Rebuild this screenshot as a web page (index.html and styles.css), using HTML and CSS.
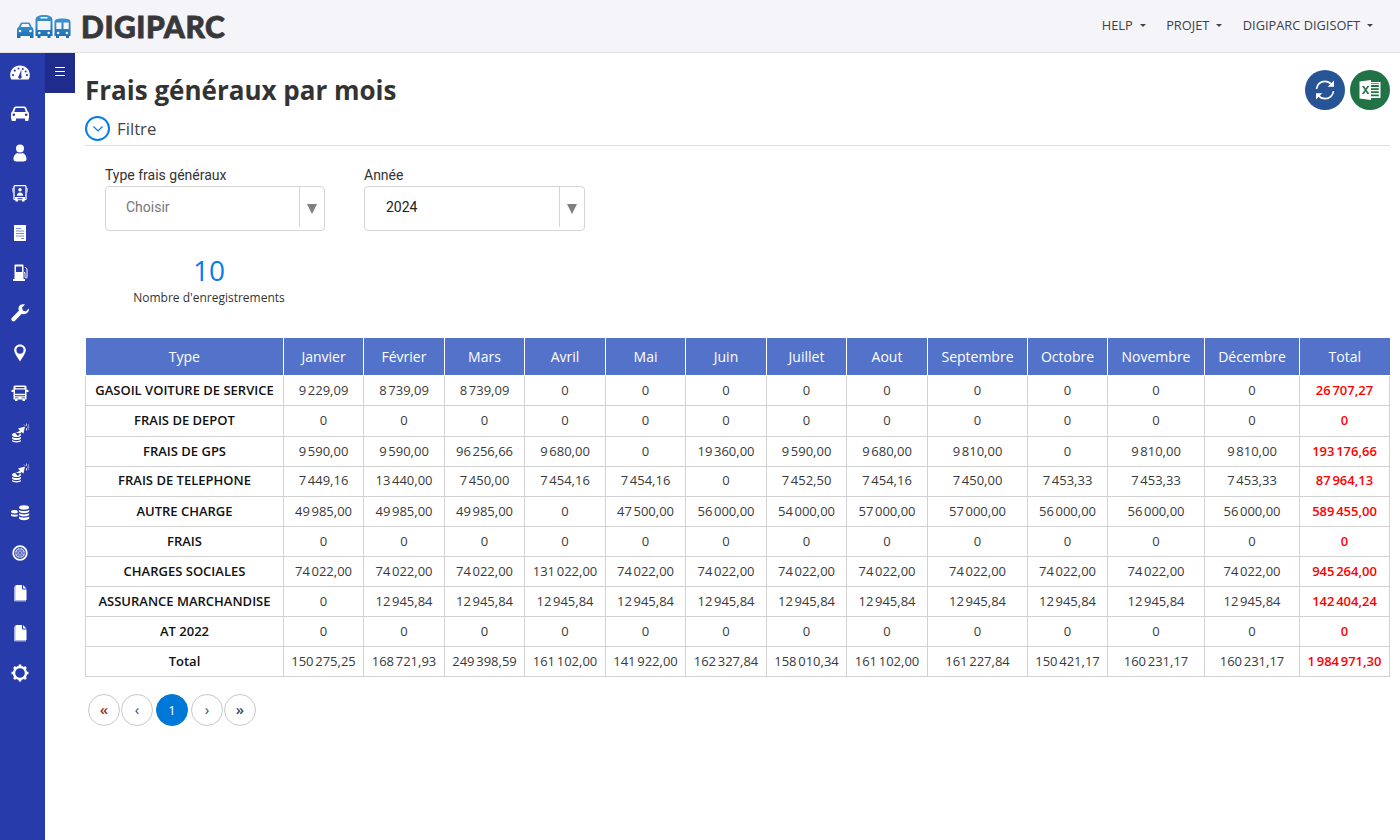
FILE: index.html
```html
<!DOCTYPE html>
<html lang="fr">
<head>
<meta charset="utf-8">
<title>Frais généraux par mois</title>
<link rel="stylesheet" href="styles.css">
</head>
<body>
<svg class="defs" width="0" height="0" aria-hidden="true">
  <defs>
    <linearGradient id="lg" x1="0" y1="0" x2="0" y2="1"><stop offset="0" stop-color="#3f93cf"/><stop offset="1" stop-color="#1a6fb0"/></linearGradient>
  </defs>
</svg>
<header class="topbar">
  <div class="brand">
    <svg class="brand-icon" width="56" height="24" viewBox="0 0 56 24">
      <path fill="url(#lg)" fill-rule="evenodd" d="M1 23v-8c0-1.500.7-2.500 1.700-3l1.500-3.300C4.600 7.800 5.300 7.500 6 7.500h6.500c.8 0 1.400.3 1.800 1.200l1.500 3.300c1 .5 1.700 1.500 1.700 3v8h-3.500v-2H4.500v2zM4.800 12h9l-1.200-3H6zM2.700 16a1.300 1.300 0 0 0 2.600 0 1.300 1.300 0 0 0-2.600 0zM13.200 16a1.300 1.300 0 0 0 2.600 0 1.300 1.300 0 0 0-2.600 0z"/>
      <path fill="url(#lg)" fill-rule="evenodd" d="M19.500 21V5c0-3.500 3-5 8.500-5s8.500 1.500 8.500 5v16h-2v2h-3v-2h-7v2h-3v-2zM21.500 6v9h13V6zM24.500 2v1.500h7V2zM22 18a1.300 1.300 0 0 0 2.600 0 1.300 1.300 0 0 0-2.600 0zM31.400 18a1.300 1.300 0 0 0 2.600 0 1.300 1.300 0 0 0-2.600 0z"/>
      <path fill="url(#lg)" fill-rule="evenodd" d="M38.500 21V7c0-2.500 2-3.500 8-3.500s8 1 8 3.500v14h-1.500v2h-3v-2h-7v2h-3v-2zM40.300 7.500V14h5.200V7.500zM47.500 7.500V14h5.200V7.500zM40.800 18a1.300 1.300 0 0 0 2.600 0 1.300 1.300 0 0 0-2.600 0zM49.600 18a1.300 1.300 0 0 0 2.600 0 1.300 1.300 0 0 0-2.600 0z"/>
    </svg>
    <span class="brand-name">DIGIPARC</span>
  </div>
  <nav class="topnav">
    <a class="topnav-item">HELP</a>
    <a class="topnav-item">PROJET</a>
    <a class="topnav-item">DIGIPARC DIGISOFT</a>
  </nav>
</header>

<div class="shell">
  <aside class="sidebar">
    <!-- gauge -->
    <svg class="side-icon" viewBox="0 0 20 20"><path fill="#fff" fill-rule="evenodd" d="M10 2.500C4.500 2.500.2 6.500.2 12c0 1.800.4 3.500 1.200 4.500h17.200c.8-1 1.200-2.700 1.200-4.500 0-5.500-4.300-9.500-9.800-9.500zM3 11a1.100 1.100 0 1 0 0 2.200A1.100 1.100 0 0 0 3 11zm1.800-4.500a1.100 1.100 0 1 0 0 2.200 1.100 1.100 0 0 0 0-2.200zm3.700-1.900a1 1 0 1 0 0 2 1 1 0 0 0 0-2zm4.300.4a1 1 0 1 0 0 2 1 1 0 0 0 0-2zm2.900 2.500a1 1 0 1 0 0 2 1 1 0 0 0 0-2zM17 11a1.100 1.100 0 1 0 0 2.200 1.100 1.100 0 0 0 0-2.200zM11.400 6.500L9 12.500a1.800 1.800 0 0 0-.8 1.500 1.800 1.800 0 1 0 3.100-1.300z"/></svg>
    <!-- car -->
    <svg class="side-icon" viewBox="0 0 20 20"><path fill="#fff" fill-rule="evenodd" d="M1.500 17v-1.500H1V11c0-1 .5-1.800 1.200-2.200L3.500 5.500C4 4 5 3.500 6.300 3.500h7.400c1.300 0 2.300.5 2.800 2l1.300 3.300c.7.400 1.200 1.200 1.200 2.200v4.500h-.5V17a1 1 0 0 1-1 1h-1.500a1 1 0 0 1-1-1v-1.500H6V17a1 1 0 0 1-1 1H2.500a1 1 0 0 1-1-1zM4.200 9h11.600l-1-3c-.2-.6-.6-1-1.300-1H6.500c-.7 0-1.100.4-1.300 1zM2.500 11.800a1.300 1.300 0 0 0 2.600 0 1.300 1.300 0 0 0-2.600 0zm12.400 0a1.300 1.300 0 0 0 2.600 0 1.300 1.300 0 0 0-2.600 0z"/></svg>
    <!-- user -->
    <svg class="side-icon" viewBox="0 0 20 20"><circle cx="10" cy="5.500" r="4" fill="#fff"/><path fill="#fff" d="M3.500 16c0-3.800 2.500-5.800 4-6 1 .8 4 .8 5 0 1.500.2 4 2.200 4 6 0 1.800-1.500 2.500-3 2.500h-7c-1.500 0-3-.7-3-2.500z"/></svg>
    <!-- bus driver -->
    <svg class="side-icon" viewBox="0 0 20 20"><path fill="none" stroke="#fff" stroke-width="1.300" d="M5 2.700h10a1 1 0 0 1 1 1v12a1 1 0 0 1-1 1H5a1 1 0 0 1-1-1v-12a1 1 0 0 1 1-1z"/><path fill="#fff" d="M5 14h10v3H5zM5.500 17h2.500v1.500H5.500zM12 17h2.500v1.500H12zM2.500 5H4v.8L3.200 6v3.500h-.7zM16 5h1.500v4.500h-.7V6L16 5.800z"/><circle cx="10" cy="6.800" r="1.700" fill="#fff"/><path fill="#fff" d="M6.800 12.800c0-2 1.400-3.300 3.200-3.300s3.200 1.300 3.200 3.300z"/><path fill="#283bab" d="M7.500 15.200h5v1h-5z"/></svg>
    <!-- document -->
    <svg class="side-icon" viewBox="0 0 20 20"><path fill="#fff" d="M4 2h12v16H4z"/><path stroke="#7d89cf" stroke-width="1" d="M6 5.500h5M6 8h8M6 10.500h8M6 13h8M11 15.500h3" fill="none"/></svg>
    <!-- fuel -->
    <svg class="side-icon" viewBox="0 0 20 20"><path fill="#fff" fill-rule="evenodd" d="M4.500 2.500C4.500 1.700 5 1.500 5.500 1.500h7c.7 0 1 .4 1 1V16H15v2H3v-2h1.500zM6 3.500V9h6V3.500z"/><path fill="none" stroke="#fff" stroke-width="1" d="M15 4l2 2v8c0 1.500-1.700 1.500-2 0V10l-1-1"/></svg>
    <!-- wrench -->
    <svg class="side-icon" viewBox="0 0 20 20"><path fill="#fff" d="M18.800 5.500l-3 3-3-1-.8-3 3-3c-2.500-.7-5 0-6 2-.7 1.300-.7 2.800 0 4L2 14.800c-1 1-1 2 0 3s2 1 3 0l6.800-7c1.300.7 3 .6 4.500-.3 2-1.200 3-3 2.500-5z"/></svg>
    <!-- pin -->
    <svg class="side-icon" viewBox="0 0 20 20"><path fill="#fff" fill-rule="evenodd" d="M10 1.500c-3.400 0-5.800 2.600-5.800 5.600 0 3.500 3.500 7.400 5.800 11.400 2.300-4 5.800-7.900 5.800-11.400 0-3-2.400-5.600-5.800-5.600zm0 2a3.600 3.600 0 1 1 0 7.200 3.600 3.600 0 0 1 0-7.200z"/></svg>
    <!-- truck front -->
    <svg class="side-icon" viewBox="0 0 20 20"><path fill="#fff" fill-rule="evenodd" d="M4.500 2.500h11l1 1v3.300h1.300a.7.700 0 0 1 .7.700v1.500h-2V16.500H15v1.500h-2.500v-1.500h-5V18H5v-1.500H3.500V9h-2V7.500a.7.700 0 0 1 .7-.7h1.300V3.500zM5.500 4v1.200h9V4zM5 6.500v4.300h10V6.500zM5 12.300v1h10v-1zM5 14.500v.8h3.500v-.8zM11.500 14.500v.8H15v-.8z"/></svg>
    <!-- coins + spark -->
    <svg class="side-icon" viewBox="0 0 20 20"><path fill="#fff" d="M2 12c0-1.300 2-2.200 4.500-2.200s4.500.9 4.500 2.200-2 2.100-4.500 2.100S2 13.300 2 12zM2 14c1 .8 2.800 1 4.500 1s3.500-.2 4.500-1v1.200c0 1.100-2 1.800-4.500 1.800S2 16.300 2 15.200zM2 17c1 .7 2.800 1 4.500 1s3.500-.3 4.500-1v.8c0 1-2 1.700-4.500 1.700S2 18.800 2 17.800zM15 3.500L8 5.500l2 2-4.500 3L8 13l3.500-4 2 1.500z"/><path stroke="#c5cbec" stroke-width="1" fill="none" d="M16.500.5v2.300M16.500 5v2.500M19.300 4h-2M14 1.500l1.300 1.300M19 1.500l-1.300 1.300M17.700 5.300L19 6.600"/></svg>
    <svg class="side-icon" viewBox="0 0 20 20"><path fill="#fff" d="M2 12c0-1.300 2-2.200 4.500-2.200s4.500.9 4.500 2.200-2 2.100-4.500 2.100S2 13.300 2 12zM2 14c1 .8 2.800 1 4.500 1s3.500-.2 4.500-1v1.200c0 1.100-2 1.800-4.500 1.800S2 16.300 2 15.200zM2 17c1 .7 2.800 1 4.500 1s3.500-.3 4.500-1v.8c0 1-2 1.700-4.500 1.700S2 18.800 2 17.800zM15 3.500L8 5.500l2 2-4.500 3L8 13l3.500-4 2 1.500z"/><path stroke="#c5cbec" stroke-width="1" fill="none" d="M16.500.5v2.300M16.500 5v2.500M19.300 4h-2M14 1.500l1.300 1.300M19 1.500l-1.300 1.300M17.700 5.300L19 6.600"/></svg>
    <!-- coin stacks -->
    <svg class="side-icon" viewBox="0 0 20 20"><path fill="#fff" d="M9 4.500c0-1.300 2-2.200 5-2.200s5.200.9 5.200 2.200-2.200 2.200-5.200 2.200-5-.9-5-2.200zM9 7c1 .8 3 1.100 5 1.100s4.200-.3 5.200-1.100v1.300c0 1.100-2.200 1.900-5.200 1.900s-5-.8-5-1.900zM9 10.300c1 .8 3 1.100 5 1.100s4.200-.3 5.200-1.100v1.300c0 1.100-2.200 1.900-5.200 1.900s-5-.8-5-1.900zM9 13.600c1 .8 3 1.100 5 1.100s4.200-.3 5.200-1.100v1.400c0 1.300-2.200 2.200-5.200 2.200s-5-.9-5-2.200zM1 8.800c0-1 1.500-1.700 3.500-1.700 1.300 0 2.500.3 3.200.8V10c-.8.300-2 .5-3.200.5-2 0-3.500-.7-3.500-1.700zM1 11c1 .6 2.300.8 3.500.8s2.400-.1 3.200-.4v1.900c-.8.3-2 .4-3.200.4-2 0-3.500-.6-3.500-1.400z"/></svg>
    <!-- tyre -->
    <svg class="side-icon" viewBox="0 0 20 20"><circle cx="10" cy="10" r="6.800" fill="none" stroke="#fff" stroke-width="1.800"/><circle cx="10" cy="10" r="5" fill="#c8cdec"/><circle cx="10" cy="10" r="3.200" fill="none" stroke="#4a5bbb" stroke-width=".8"/><path stroke="#4a5bbb" stroke-width=".7" d="M10 5v10M5 10h10M6.500 6.500l7 7M13.500 6.500l-7 7"/></svg>
    <!-- file 3d -->
    <svg class="side-icon" viewBox="0 0 20 20"><path fill="#a8b0e0" d="M4 3.500h2V17h10v1.500H5a1 1 0 0 1-1-1z"/><path fill="#fff" d="M5.500 2H12v3.500a1 1 0 0 0 1 1h3.500V17h-11z"/><path fill="#fff" d="M13 2l3.500 3.500H13z"/></svg>
    <svg class="side-icon" viewBox="0 0 20 20"><path fill="#a8b0e0" d="M4 3.500h2V17h10v1.500H5a1 1 0 0 1-1-1z"/><path fill="#fff" d="M5.500 2H12v3.500a1 1 0 0 0 1 1h3.500V17h-11z"/><path fill="#fff" d="M13 2l3.500 3.500H13z"/></svg>
    <!-- gear -->
    <svg class="side-icon" viewBox="0 0 20 20"><circle cx="10" cy="10" r="6" fill="none" stroke="#fff" stroke-width="2.400"/><path stroke="#fff" stroke-width="2.600" d="M10 1.500v3M10 15.500v3M1.500 10h3M15.500 10h3M4 4l2 2M14 14l2 2M16 4l-2 2M6 14l-2 2"/></svg>
  </aside>

  <button class="toggle" type="button" aria-label="Menu"><span class="burger"></span></button>

  <main class="content">
    <div class="title-row">
      <h1 class="title">Frais généraux par mois</h1>
      <div class="actions">
        <button class="round-btn refresh" type="button" aria-label="Actualiser">
          <svg width="24" height="24" viewBox="0 0 24 24" fill="none" stroke="#fff" stroke-width="1.700"><path d="M3.500 11C4 6.500 7.500 3.300 12 3.300c2.800 0 5 1.200 6.600 3.200"/><path fill="#fff" stroke="none" d="M21 2.500v6.300h-6.300z"/><path d="M20.500 13c-.5 4.500-4 7.700-8.500 7.700-2.800 0-5-1.200-6.600-3.200"/><path fill="#fff" stroke="none" d="M3 21.500v-6.300h6.300z"/></svg>
        </button>
        <button class="round-btn excel" type="button" aria-label="Excel">
          <svg width="24" height="24" viewBox="0 0 24 24"><path fill="#fff" d="M13 4h9.500v16H13v-1.800h7.800v-1.800H13v-1.300h7.800v-1.800H13V12h7.800v-1.800H13V8.900h7.800V7.100H13V5.800h7.800V5H13z"/><path fill="#fff" fill-rule="evenodd" d="M1.500 3.500L13 2v20L1.500 20.500zM4 8l2.700 4L3.800 16h2.100l1.700-2.700L9.300 16h2.200l-2.900-4.100L11.300 8H9.300L7.700 10.500 6.100 8z"/></svg>
        </button>
      </div>
    </div>

    <div class="filter-row">
      <span class="filter-toggle"><svg width="12" height="8" viewBox="0 0 12 8" fill="none" stroke="#0b76e0" stroke-width="1.200"><path d="M1.500 1.500L6 6l4.500-4.500"/></svg></span>
      <span class="filter-label">Filtre</span>
    </div>

    <form class="filters">
      <div class="field">
        <label class="field-label">Type frais généraux</label>
        <div class="select"><span class="select-value muted">Choisir</span><span class="select-arrow"><i class="tri"></i></span></div>
      </div>
      <div class="field">
        <label class="field-label">Année</label>
        <div class="select"><span class="select-value">2024</span><span class="select-arrow"><i class="tri"></i></span></div>
      </div>
    </form>

    <div class="count">
      <div class="count-num">10</div>
      <div class="count-label">Nombre d'enregistrements</div>
    </div>

    <table class="grid">
      <colgroup>
        <col class="c-type"><col class="c-m1"><col class="c-m2"><col class="c-m1"><col class="c-m2"><col class="c-m1"><col class="c-m2"><col class="c-m1"><col class="c-m2"><col class="c-sep"><col class="c-oct"><col class="c-nov"><col class="c-dec"><col class="c-tot">
      </colgroup>
      <thead>
        <tr><th>Type</th><th>Janvier</th><th>Février</th><th>Mars</th><th>Avril</th><th>Mai</th><th>Juin</th><th>Juillet</th><th>Aout</th><th>Septembre</th><th>Octobre</th><th>Novembre</th><th>Décembre</th><th>Total</th></tr>
      </thead>
      <tbody>
        <tr><td class="lab">GASOIL VOITURE DE SERVICE</td><td>9&#8239;229,09</td><td>8&#8239;739,09</td><td>8&#8239;739,09</td><td>0</td><td>0</td><td>0</td><td>0</td><td>0</td><td>0</td><td>0</td><td>0</td><td>0</td><td class="tot">26&#8239;707,27</td></tr>
        <tr><td class="lab">FRAIS DE DEPOT</td><td>0</td><td>0</td><td>0</td><td>0</td><td>0</td><td>0</td><td>0</td><td>0</td><td>0</td><td>0</td><td>0</td><td>0</td><td class="tot">0</td></tr>
        <tr><td class="lab">FRAIS DE GPS</td><td>9&#8239;590,00</td><td>9&#8239;590,00</td><td>96&#8239;256,66</td><td>9&#8239;680,00</td><td>0</td><td>19&#8239;360,00</td><td>9&#8239;590,00</td><td>9&#8239;680,00</td><td>9&#8239;810,00</td><td>0</td><td>9&#8239;810,00</td><td>9&#8239;810,00</td><td class="tot">193&#8239;176,66</td></tr>
        <tr><td class="lab">FRAIS DE TELEPHONE</td><td>7&#8239;449,16</td><td>13&#8239;440,00</td><td>7&#8239;450,00</td><td>7&#8239;454,16</td><td>7&#8239;454,16</td><td>0</td><td>7&#8239;452,50</td><td>7&#8239;454,16</td><td>7&#8239;450,00</td><td>7&#8239;453,33</td><td>7&#8239;453,33</td><td>7&#8239;453,33</td><td class="tot">87&#8239;964,13</td></tr>
        <tr><td class="lab">AUTRE CHARGE</td><td>49&#8239;985,00</td><td>49&#8239;985,00</td><td>49&#8239;985,00</td><td>0</td><td>47&#8239;500,00</td><td>56&#8239;000,00</td><td>54&#8239;000,00</td><td>57&#8239;000,00</td><td>57&#8239;000,00</td><td>56&#8239;000,00</td><td>56&#8239;000,00</td><td>56&#8239;000,00</td><td class="tot">589&#8239;455,00</td></tr>
        <tr><td class="lab">FRAIS</td><td>0</td><td>0</td><td>0</td><td>0</td><td>0</td><td>0</td><td>0</td><td>0</td><td>0</td><td>0</td><td>0</td><td>0</td><td class="tot">0</td></tr>
        <tr><td class="lab">CHARGES SOCIALES</td><td>74&#8239;022,00</td><td>74&#8239;022,00</td><td>74&#8239;022,00</td><td>131&#8239;022,00</td><td>74&#8239;022,00</td><td>74&#8239;022,00</td><td>74&#8239;022,00</td><td>74&#8239;022,00</td><td>74&#8239;022,00</td><td>74&#8239;022,00</td><td>74&#8239;022,00</td><td>74&#8239;022,00</td><td class="tot">945&#8239;264,00</td></tr>
        <tr><td class="lab">ASSURANCE MARCHANDISE</td><td>0</td><td>12&#8239;945,84</td><td>12&#8239;945,84</td><td>12&#8239;945,84</td><td>12&#8239;945,84</td><td>12&#8239;945,84</td><td>12&#8239;945,84</td><td>12&#8239;945,84</td><td>12&#8239;945,84</td><td>12&#8239;945,84</td><td>12&#8239;945,84</td><td>12&#8239;945,84</td><td class="tot">142&#8239;404,24</td></tr>
        <tr><td class="lab">AT 2022</td><td>0</td><td>0</td><td>0</td><td>0</td><td>0</td><td>0</td><td>0</td><td>0</td><td>0</td><td>0</td><td>0</td><td>0</td><td class="tot">0</td></tr>
        <tr><td class="lab">Total</td><td>150&#8239;275,25</td><td>168&#8239;721,93</td><td>249&#8239;398,59</td><td>161&#8239;102,00</td><td>141&#8239;922,00</td><td>162&#8239;327,84</td><td>158&#8239;010,34</td><td>161&#8239;102,00</td><td>161&#8239;227,84</td><td>150&#8239;421,17</td><td>160&#8239;231,17</td><td>160&#8239;231,17</td><td class="tot">1&#8239;984&#8239;971,30</td></tr>
      </tbody>
    </table>

    <div class="pager">
      <a class="page first">«</a>
      <a class="page">‹</a>
      <a class="page active">1</a>
      <a class="page">›</a>
      <a class="page last">»</a>
    </div>
  </main>
</div>
</body>
</html>
```

FILE: styles.css
```css
* { box-sizing: border-box; }
html, body { margin: 0; height: 100%; }
body {
  width: 1400px;
  height: 840px;
  overflow: hidden;
  background: #fff;
  color: #333;
  font-family: "Open Sans", sans-serif;
  display: flex;
  flex-direction: column;
}
.defs { position: absolute; }

.topbar {
  height: 53px;
  flex: none;
  background: #f5f4f8;
  border-bottom: 1px solid #e1e1e3;
  display: flex;
  align-items: center;
  justify-content: space-between;
  padding: 0 27px 0 16px;
}
.brand { display: flex; align-items: center; gap: 9px; }
.brand-icon { display: block; margin-top: 2px; }
.brand-name {
  font-family: "Lato", sans-serif;
  font-weight: 900;
  font-size: 30px;
  letter-spacing: .55px;
  -webkit-text-stroke: .8px #38383a;
  color: #38383a;
  line-height: 1;
}
.topnav { display: flex; gap: 20.500px; margin-top: -2px; }
.topnav-item {
  font-size: 12.800px;
  color: #3a3f4a;
  display: flex;
  align-items: center;
  gap: 7px;
}
.topnav-item::after {
  content: "";
  border-top: 3.500px solid #444;
  border-left: 3.500px solid transparent;
  border-right: 3.500px solid transparent;
}

.shell { flex: 1; display: flex; min-height: 0; }
.sidebar {
  width: 45px;
  flex: none;
  background: #283bab;
  display: flex;
  flex-direction: column;
  align-items: center;
  gap: 20px;
  padding: 10px 5px 0 0;
}
.side-icon { width: 20px; height: 20px; display: block; flex: none; }

.toggle {
  width: 30px;
  height: 40px;
  flex: none;
  background: #1f2c8c;
  border: 0;
  padding: 0;
  display: flex;
  align-items: center;
  justify-content: center;
}
.burger {
  width: 10px;
  height: 9px;
  border-top: 1px solid #fff;
  border-bottom: 1px solid #fff;
  position: relative;
  display: block;
  margin-top: -3px;
}
.burger::after {
  content: "";
  position: absolute;
  left: 0;
  right: 0;
  top: 3px;
  height: 1px;
  background: #fff;
}

.content { flex: 1; min-width: 0; padding: 17px 10px 0 10px; }

.title-row { display: flex; justify-content: space-between; align-items: flex-start; height: 48px; }
.title {
  margin: 0;
  font-size: 26px;
  font-weight: 700;
  line-height: 40px;
  color: #333;
}
.actions { display: flex; gap: 5px; }
.round-btn {
  width: 40px;
  height: 40px;
  border: 0;
  border-radius: 50%;
  padding: 0;
  display: flex;
  align-items: center;
  justify-content: center;
}
.refresh { background: #265495; }
.excel { background: #217346; }

.filter-row {
  display: flex;
  align-items: center;
  gap: 7px;
  height: 28px;
  border-bottom: 1px solid #dedede;
  padding-bottom: 6px;
}
.filter-toggle {
  width: 25px;
  height: 25px;
  flex: none;
  border: 2px solid #0b7be8;
  border-radius: 50%;
  display: flex;
  align-items: center;
  justify-content: center;
}
.filter-label { font-size: 16.800px; color: #444; }

.filters { display: flex; gap: 39px; padding: 20px 0 0 20px; }
.field { width: 220px; }
.field-label {
  display: block;
  font-family: "Roboto", sans-serif;
  font-size: 14px;
  line-height: 18px;
  margin-bottom: 2px;
  color: #333;
}
.field + .field { width: 221px; }
.select {
  height: 45px;
  border: 1px solid #d5d5d5;
  border-radius: 4px;
  display: flex;
  align-items: stretch;
  background: #fff;
  font-family: "Roboto", sans-serif;
  font-size: 14px;
}
.select-value { flex: 1; padding-left: 21px; line-height: 41px; color: #222; }
.select-value.muted { color: #777; padding-left: 20px; }
.select-arrow {
  width: 25px;
  margin: 0 0 3px;
  border-left: 1px solid #d5d5d5;
  display: flex;
  align-items: center;
  justify-content: center;
}
.tri {
  border-top: 10px solid #7f7f7f;
  border-left: 5px solid transparent;
  border-right: 5px solid transparent;
  margin-top: 3px;
}

.count { width: 208px; margin: 23px 0 0 20px; text-align: center; }
.count-num { font-size: 28px; line-height: 32px; color: #0b7bf0; }
.count-label { font-size: 12px; line-height: 16px; color: #333; margin-top: 4px; }

.grid {
  width: 1305px;
  margin-top: 32px;
  border-collapse: collapse;
  table-layout: fixed;
  font-size: 13px;
}
.c-type { width: 198px; }
.c-m1 { width: 80px; }
.c-m2 { width: 81px; }
.c-sep { width: 100px; }
.c-oct { width: 80px; }
.c-nov { width: 97px; }
.c-dec { width: 95px; }
.c-tot { width: 90px; }
.grid th {
  height: 37px;
  background: #5373cb;
  color: #fff;
  font-size: 14px;
  font-weight: 400;
  border: 1px solid #fff;
  border-top: 0;
  padding: 0;
  text-align: center;
}
.grid th:first-child { border-left: 0; }
.grid th:last-child { border-right: 0; }
.grid td {
  height: 30px;
  border: 1px solid #d2d2d2;
  padding: 0;
  text-align: center;
  color: #3a3a3a;
  white-space: nowrap;
}
.grid tbody tr:nth-child(2) td { height: 31px; padding-bottom: 2px; }
.grid tbody tr:nth-child(4) td { padding-bottom: 2px; }
.grid td.lab { color: #111; font-weight: 600; }
.grid td.tot { color: #f00; font-weight: 600; }

.pager { display: flex; align-items: center; margin: 17px 0 0 3px; }
.page {
  width: 32px;
  height: 32px;
  border: 1px solid #c8c8c8;
  border-radius: 50%;
  display: flex;
  align-items: center;
  justify-content: center;
  font-size: 15px;
  color: #2e4d66;
  margin-right: 1px;
  padding-bottom: 2px;
}
.page.first { color: #8a3b20; font-weight: 600; }
.page.last { font-weight: 600; }
.page.active {
  background: #0078d7;
  border-color: #0078d7;
  color: #fff;
  font-size: 13px;
  margin: 0 3px 0 2px;
  padding-bottom: 0;
}
```
